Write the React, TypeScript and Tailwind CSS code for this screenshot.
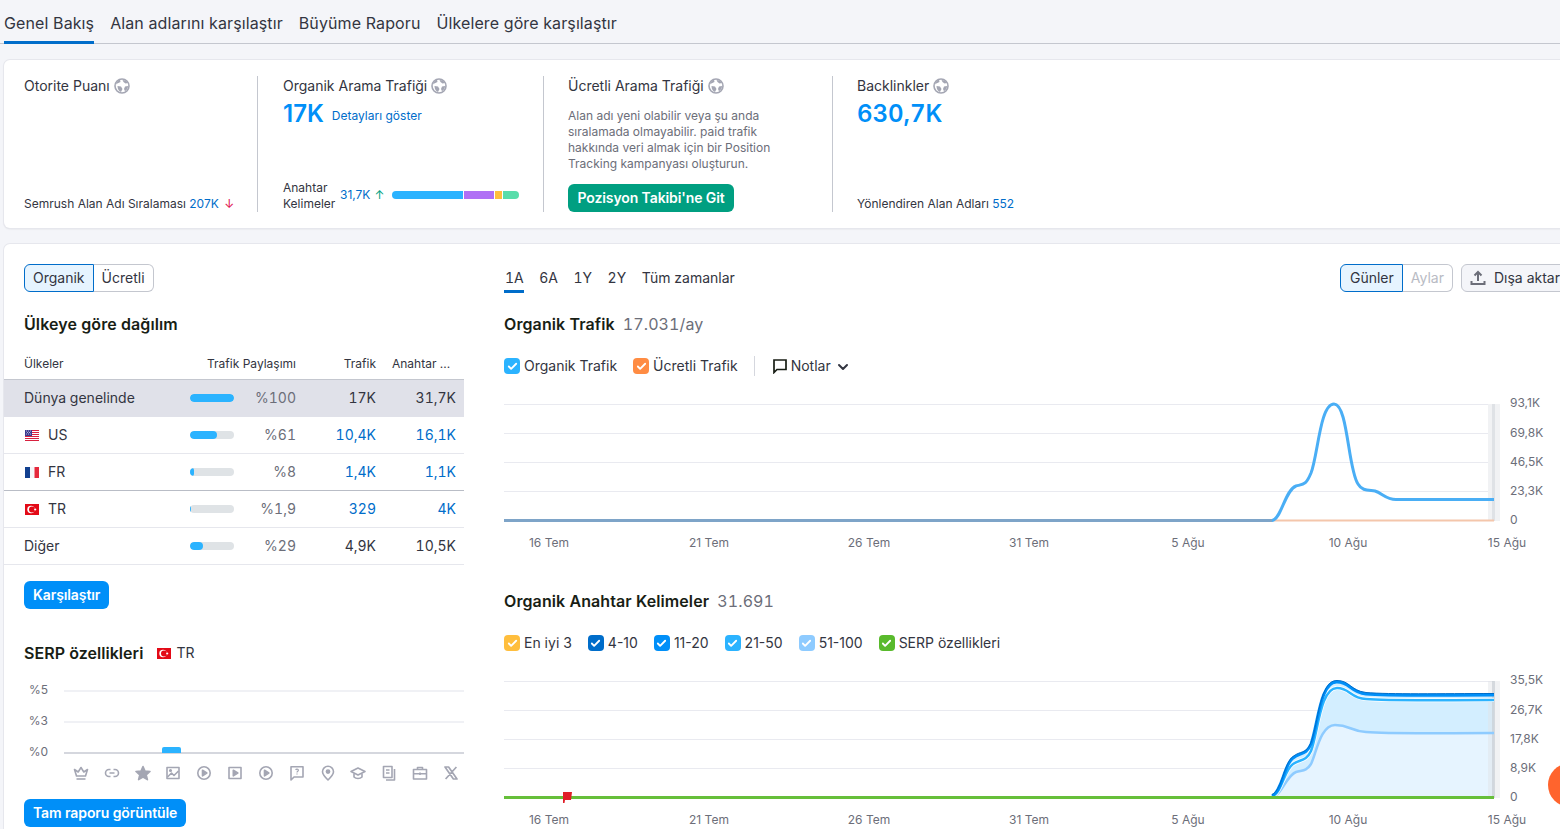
import React from 'react';
import { Check, ChevronDown } from 'lucide-react';

const tabs = ['Genel Bakış', 'Alan adlarını karşılaştır', 'Büyüme Raporu', 'Ülkelere göre karşılaştır'];
const ranges = ['1A', '6A', '1Y', '2Y', 'Tüm zamanlar'];

const rows = [
  { name: 'Dünya genelinde', flag: null, bar: 100, pct: '%100', traffic: '17K', kw: '31,7K', link: false, cls: 'bg-[#e0e1e9] border-b border-transparent' },
  { name: 'US', flag: 'us', bar: 61, pct: '%61', traffic: '10,4K', kw: '16,1K', link: true, cls: 'border-b border-[#e6e7ed]' },
  { name: 'FR', flag: 'fr', bar: 8, pct: '%8', traffic: '1,4K', kw: '1,1K', link: true, cls: 'border-b border-[#b9bdc6]' },
  { name: 'TR', flag: 'tr', bar: 1.9, pct: '%1,9', traffic: '329', kw: '4K', link: true, cls: 'border-b border-[#e6e7ed]' },
  { name: 'Diğer', flag: null, bar: 29, pct: '%29', traffic: '4,9K', kw: '10,5K', link: false, cls: 'border-b border-[#e6e7ed]' },
];

const GlobeIcon = () => (
  <svg width="16" height="16" viewBox="0 0 16 16" className="shrink-0">
    <circle cx="8" cy="8" r="7" fill="none" stroke="#a4a6b3" strokeWidth="1.6" />
    <path d="M2 6.5 C4 4.5 5 5 6.5 4 L6 1.8 C4 2 2.6 3.8 2 6.5Z M8.5 2 L9.5 4 L11.5 5.5 L14 5 C13 3 11 2 8.5 2Z M3.5 8 L7 8.5 L8.5 11 L7 14 C5 13.5 3.5 11 3.5 8Z M11 8.5 L14 8 C14 10.5 12.8 12.2 11 13.2 L10 11Z" fill="#a4a6b3" />
  </svg>
);

const Flag = ({ code }: { code: string }) => {
  if (code === 'us') {
    return (
      <svg width="14" height="11" viewBox="0 0 14 11" className="ml-px shrink-0">
        <rect width="14" height="11" fill="#fff" />
        {[0, 2, 4, 6, 8, 10].map((y) => <rect key={y} y={y} width="14" height="1" fill="#d8213f" />)}
        <rect width="7" height="6" fill="#3c3b8e" />
        <path d="M1 1h1M3 1h1M5 1h1M2 2.5h1M4 2.5h1M1 4h1M3 4h1M5 4h1" stroke="#cfd0e8" strokeWidth="0.8" />
      </svg>
    );
  }
  if (code === 'fr') {
    return (
      <svg width="14" height="11" viewBox="0 0 14 11" className="ml-px shrink-0">
        <rect width="5" height="11" fill="#12408f" />
        <rect x="5" width="4.5" height="11" fill="#f6f6f8" />
        <rect x="9.5" width="4.5" height="11" fill="#e5293c" />
      </svg>
    );
  }
  return (
    <svg width="14" height="11" viewBox="0 0 14 11" className="ml-px shrink-0">
      <rect width="14" height="11" fill="#e30a17" />
      <circle cx="6" cy="5.5" r="3.7" fill="#fff" />
      <circle cx="7" cy="5.5" r="3" fill="#e30a17" />
      <circle cx="10.2" cy="5.5" r="1.1" fill="#fff" />
    </svg>
  );
};

const Box = ({ color, label }: { color: string; label: string }) => (
  <div className="flex items-center gap-1 text-sm text-[#333541]">
    <span className={`flex h-4 w-4 items-center justify-center rounded-[4px] ${color}`}>
      <Check size={11} strokeWidth={4} className="text-white" />
    </span>
    <span>{label}</span>
  </div>
);

const Bar = ({ value }: { value: number }) => (
  <div className="h-2 w-11 overflow-hidden rounded-full bg-[#dfe3e6]">
    <div className="h-full rounded-full bg-[#2bb3ff]" style={{ width: `${value}%` }} />
  </div>
);

const serpIcons = [
  <><path d="M1.5 4.5 L5.2 7 L8 2.5 L10.8 7 L14.5 4.5 L12.5 11 H3.5Z" /><path d="M3.5 14 H12.5" /></>,
  <><path d="M6.5 4.5 H5 a3.5 3.5 0 0 0 0 7 H6.5 M9.5 4.5 H11 a3.5 3.5 0 0 1 0 7 H9.5 M5.5 8 H10.5" /></>,
  <path d="M8 1.5 L10 6 L15 6.5 L11.2 9.8 L12.4 14.6 L8 12 L3.6 14.6 L4.8 9.8 L1 6.5 L6 6Z" fill="#a4a6b3" />,
  <><rect x="2" y="2.5" width="12" height="11" /><path d="M2.5 12 L6.5 8 L9 10.5 L13.5 6" /><circle cx="5.5" cy="5.5" r="0.8" fill="#a4a6b3" /></>,
  <><circle cx="8" cy="8" r="6.2" /><path d="M6.5 5.2 L10.8 8 L6.5 10.8Z" fill="#a4a6b3" /></>,
  <><rect x="2" y="2.5" width="12" height="11" /><path d="M6.3 5.2 L10.8 8 L6.3 10.8Z" fill="#a4a6b3" /></>,
  <><circle cx="8" cy="8" r="6.2" /><path d="M6.5 5.2 L10.8 8 L6.5 10.8Z" fill="#a4a6b3" /></>,
  <><path d="M2 1.8 H14 V12 H5 L2 15Z" /><path d="M6.7 5 C7 3.7 9.4 3.8 9.4 5.2 C9.4 6.2 8 6.3 8 7.4 M8 8.6 V9.6" strokeWidth="1.2" /></>,
  <><path d="M8 15 C5 12 2.5 9.5 2.5 6.7 a5.5 5.5 0 0 1 11 0 C13.5 9.5 11 12 8 15Z" /><circle cx="8" cy="6.6" r="1.6" fill="#a4a6b3" /></>,
  <><path d="M1 6.5 L8 3 L15 6.5 L8 10Z" /><path d="M4 8.5 V12 C6 14 10 14 12 12 V8.5" /></>,
  <><path d="M2.5 1.5 H11 V12.5 H2.5Z" /><path d="M5 5 H8.5 M5 8 H8.5" /><path d="M13.5 4 V15 H5" /></>,
  <><rect x="1.5" y="4.5" width="13" height="9.5" /><path d="M5.5 4.5 V2.5 H10.5 V4.5 M1.5 8.8 H14.5 M8 7.5 V10" /></>,
  <path d="M2 2 H5.6 L14 14 H10.4Z M13.4 2 L2.6 14" strokeWidth="1.7" />,
];

const SerpIcon = ({ children }: { children: React.ReactNode }) => (
  <svg width="16" height="16" viewBox="0 0 16 16" fill="none" stroke="#a4a6b3" strokeWidth="1.6" strokeLinejoin="round">
    {children}
  </svg>
);

const AxisText = ({ x, y, t, anchor = 'start' }: { x: number; y: number; t: string; anchor?: 'start' | 'middle' }) => (
  <text x={x} y={y} fontSize="12" fill="#6c6e79" textAnchor={anchor}>{t}</text>
);

const xTicks: [number, string][] = [[549, '16 Tem'], [709, '21 Tem'], [869, '26 Tem'], [1029, '31 Tem'], [1188, '5 Ağu'], [1348, '10 Ağu'], [1507, '15 Ağu']];

const TrafficChart = () => (
  <svg width="1056" height="165" viewBox="504 390 1056 165" className="block">
    {[404, 433, 462, 491].map((y) => <line key={y} x1="504" x2="1494" y1={y + 0.5} y2={y + 0.5} stroke="#e9eaf0" strokeWidth="1" />)}
    <rect x="1488" y="404" width="12" height="117" fill="#f1f2f4" />
    <rect x="1492" y="404" width="3" height="117" fill="#dfe2e6" />
    <line x1="504" x2="1494" y1="520.5" y2="520.5" stroke="#f4c6ab" strokeWidth="2" />
    <path d="M504 520.5 H1272 C1281 520 1285 490 1296 486 C1304 484 1306 485 1311 473 C1318 455 1320 404 1334 404 C1348 404 1348 470 1358 484 C1362 491 1368 490 1375 491 C1382 493 1386 499.5 1396 499.5 H1494" fill="none" stroke="#4aaef5" strokeWidth="3" />
    <line x1="504" x2="1272" y1="520.5" y2="520.5" stroke="#7ea4c8" strokeWidth="3" />
    {['93,1K', '69,8K', '46,5K', '23,3K', '0'].map((t, i) => <AxisText key={t} x={1510} y={[407, 437, 466, 495, 524][i]} t={t} />)}
    {xTicks.map(([x, t]) => <AxisText key={t} x={x} y={547} t={t} anchor="middle" />)}
  </svg>
);

const top1 = 'M1272 796 C1282 792 1284 764 1293 758 C1300 752 1306 756 1311 744 C1318 725 1320 681 1337 682 C1350 682 1350 692 1366 694 C1390 696 1440 695 1494 695';
const top2 = 'M1272 796 C1282 793 1284 770 1293 764 C1300 759 1306 762 1311 751 C1318 733 1320 688 1337 688 C1350 688 1350 698 1366 699 C1390 701 1440 700 1494 700';
const low = 'M1272 797 C1282 795 1286 776 1296 772 C1302 770 1306 772 1311 764 C1316 755 1320 725 1335 725 C1350 725 1350 731 1366 732 C1390 734 1440 733 1494 733';

const KeywordChart = () => (
  <svg width="1056" height="159" viewBox="504 670 1056 159" className="block">
    {[681, 710, 739, 768].map((y) => <line key={y} x1="504" x2="1494" y1={y + 0.5} y2={y + 0.5} stroke="#e9eaf0" strokeWidth="1" />)}
    <path d={`${top1} V797 H1272Z`} fill="#d3eeff" />
    <path d={`${low} V797 H1272Z`} fill="#e6f4ff" />
    <rect x="1488" y="681" width="12" height="117" fill="#dfe2e6" opacity="0.45" />
    <rect x="1492" y="681" width="3" height="117" fill="#c9ced4" opacity="0.7" />
    <path d={low} fill="none" stroke="#8ecbff" strokeWidth="2.5" />
    <path d={top2} fill="none" stroke="#fff" strokeWidth="4" />
    <path d={top2} fill="none" stroke="#2bb3ff" strokeWidth="2.5" />
    <path d={top1} fill="none" stroke="#008ff8" strokeWidth="3" />
    <path d={top1} fill="none" stroke="#006dca" strokeWidth="1" transform="translate(0 -1.5)" />
    <line x1="504" x2="1494" y1="797.5" y2="797.5" stroke="#66bf3a" strokeWidth="3" />
    <path d="M563 792 H572 L571 800 H565 L564.5 803 H563Z" fill="#e01f28" />
    {['35,5K', '26,7K', '17,8K', '8,9K', '0'].map((t, i) => <AxisText key={t} x={1510} y={[684, 714, 743, 772, 801][i]} t={t} />)}
    {xTicks.map(([x, t]) => <AxisText key={t} x={x} y={824} t={t} anchor="middle" />)}
  </svg>
);

const Value = ({ children, className = '' }: { children: React.ReactNode; className?: string }) => (
  <span className={`text-right ${className}`}>{children}</span>
);

export default function App() {
  return (
    <div className="relative h-[829px] w-[1560px] overflow-hidden bg-[#f4f5f9] font-['Inter',sans-serif] text-[#333541]">
      {/* Tabs */}
      <div className="flex h-11 gap-4 border-b border-[#c4c7cf] pl-1">
        {tabs.map((tab, i) => (
          <div key={tab} className={`relative flex h-11 items-center pt-[2px] text-base tracking-[0.105px] ${i === 0 ? 'after:absolute after:bottom-0 after:left-0 after:right-0 after:h-[3px] after:bg-[#006dca]' : ''}`}>
            {tab}
          </div>
        ))}
      </div>

      {/* Summary card */}
      <div className="ml-1 mt-4 flex h-[168px] w-[1580px] rounded-md bg-white py-4 shadow-[0_0_0_1px_#e6e7ed,0_1px_2px_rgba(0,0,0,0.12)]">
        <div className="flex w-[254px] flex-col justify-between border-r border-[#c4c7cf] pl-5">
          <div className="flex h-5 items-center gap-1 text-sm">Otorite Puanı <GlobeIcon /></div>
          <div className="text-xs">Semrush Alan Adı Sıralaması <span className="text-[#006dca]">207K</span> <span className="ml-0.5 text-[#e0114e]">↓</span></div>
        </div>

        <div className="flex w-[286px] flex-col border-r border-[#c4c7cf] pl-[25px]">
          <div className="flex h-5 items-center gap-1 text-sm">Organik Arama Trafiği <GlobeIcon /></div>
          <div className="mt-0.5 flex items-center gap-2">
            <span className="text-2xl font-semibold leading-8 text-[#008ff8]">17K</span>
            <span className="mt-1 text-xs text-[#006dca]">Detayları göster</span>
          </div>
          <div className="mt-auto flex items-center">
            <div className="w-[57px] text-xs leading-4">Anahtar Kelimeler</div>
            <span className="-mt-0.5 text-xs text-[#006dca]">31,7K</span>
            <span className="-mt-0.5 ml-1 text-xs text-[#009f81]">↑</span>
            <div className="ml-2 -mt-0.5 flex h-2 w-[127px] gap-px overflow-hidden rounded-full">
              <div className="w-[71px] bg-[#2bb3ff]" />
              <div className="w-[30px] bg-[#b070f5]" />
              <div className="w-[7px] bg-[#ffbe3d]" />
              <div className="flex-1 bg-[#59ddaa]" />
            </div>
          </div>
        </div>

        <div className="flex w-[289px] flex-col border-r border-[#c4c7cf] pl-6">
          <div className="flex h-5 items-center gap-1 text-sm">Ücretli Arama Trafiği <GlobeIcon /></div>
          <p className="mt-[12px] w-[212px] text-xs leading-4 text-[#6c6e79]">Alan adı yeni olabilir veya şu anda sıralamada olmayabilir. paid trafik hakkında veri almak için bir Position Tracking kampanyası oluşturun.</p>
          <button className="mt-auto flex h-7 w-[166px] items-center justify-center rounded-md bg-[#009f81] text-sm font-semibold tracking-[-0.1px] text-white">Pozisyon Takibi'ne Git</button>
        </div>

        <div className="flex flex-col pl-6">
          <div className="flex h-5 items-center gap-1 text-sm">Backlinkler <GlobeIcon /></div>
          <span className="mt-0.5 text-2xl font-semibold leading-8 tabular-nums text-[#008ff8]">630,7K</span>
          <div className="mt-auto text-xs">Yönlendiren Alan Adları <span className="text-[#006dca]">552</span></div>
        </div>
      </div>

      {/* Main card */}
      <div className="ml-1 mt-4 flex h-[620px] w-[1580px] gap-10 rounded-md bg-white pt-5 shadow-[0_0_0_1px_#e6e7ed]">
        <div className="w-[460px] shrink-0">
          <div className="ml-5 flex h-7 w-fit text-sm">
            <div className="flex items-center rounded-l-md border border-[#006dca] bg-[#e6f4ff] px-2">Organik</div>
            <div className="flex items-center rounded-r-md border border-l-0 border-[#c4c7cf] px-2">Ücretli</div>
          </div>
          <h2 className="ml-5 mt-[22px] text-base font-semibold leading-5 tracking-[0.1px] text-[#181e15]">Ülkeye göre dağılım</h2>

          <div className="mt-[18px] grid h-[28px] grid-cols-[186px_44px_62px_80px_80px] items-center border-b border-[#c4c7cf] pb-[3px] text-xs">
            <span className="pl-5">Ülkeler</span>
            <Value className="col-span-2">Trafik Paylaşımı</Value>
            <Value>Trafik</Value>
            <span className="pl-4 pr-1">Anahtar ...</span>
          </div>

          {rows.map((row) => (
            <div key={row.name} className={`grid h-[37px] grid-cols-[186px_44px_62px_80px_80px] items-center pr-2 text-sm tabular-nums ${row.cls}`}>
              <span className="flex items-center gap-[9px] pl-5">
                {row.flag && <Flag code={row.flag} />}
                {row.name}
              </span>
              <Bar value={row.bar} />
              <Value className="text-[#6c6e79]">{row.pct}</Value>
              <Value className={row.link ? 'text-[#006dca]' : ''}>{row.traffic}</Value>
              <Value className={row.link ? 'text-[#006dca]' : ''}>{row.kw}</Value>
            </div>
          ))}

          <button className="ml-5 mt-4 flex h-7 items-center rounded-md bg-[#008ff8] px-[9px] text-sm font-semibold tracking-[-0.1px] text-white">Karşılaştır</button>

          <div className="ml-5 mt-[34px] flex items-center gap-[13px]">
            <h2 className="text-base font-semibold leading-5 tracking-[0.05px] text-[#181e15]">SERP özellikleri</h2>
            <div className="flex items-center gap-[5px] text-sm"><Flag code="tr" /> TR</div>
          </div>

          {/* SERP chart */}
          <div className="ml-5 mt-3">
            <div className="flex h-[31px] items-center gap-4 text-xs text-[#6c6e79]"><span className="w-6 pb-0.5 text-right">%5</span><div className="h-0.5 flex-1 bg-[#f0f1f5]" /></div>
            <div className="flex h-[31px] items-center gap-4 text-xs text-[#6c6e79]"><span className="w-6 pb-0.5 text-right">%3</span><div className="h-0.5 flex-1 bg-[#f0f1f5]" /></div>
            <div className="relative flex h-[31px] items-center gap-4 text-xs text-[#6c6e79]">
              <span className="w-6 pb-0.5 text-right">%0</span>
              <div className="h-0.5 flex-1 bg-[#d5d7de]" />
              <div className="absolute left-[138px] top-[10px] h-[6px] w-[19px] rounded-t-[2px] bg-[#2bb3ff]" />
            </div>
            <div className="relative ml-[49px] -mt-[3px] flex w-[386px] justify-between">
              {serpIcons.map((icon, i) => <SerpIcon key={i}>{icon}</SerpIcon>)}
            </div>
          </div>

          <button className="ml-5 mt-[18px] flex h-7 items-center rounded-md bg-[#008ff8] px-[9px] text-sm font-semibold tracking-[-0.1px] text-white">Tam raporu görüntüle</button>
        </div>

        <div className="w-[1076px] shrink-0">
          <div className="flex h-7 items-center justify-between pr-[11px]">
            <div className="flex gap-[15.5px] pl-px text-sm tabular-nums">
              {ranges.map((r, i) => (
                <span key={r} className={`relative ${i === 0 ? 'after:absolute after:-left-px after:right-0 after:top-[22px] after:h-[3px] after:bg-[#006dca]' : ''}`}>{r}</span>
              ))}
            </div>
            <div className="flex text-sm">
              <div className="flex items-center rounded-l-md border border-[#006dca] bg-[#e6f4ff] pl-[9px] pr-2">Günler</div>
              <div className="flex items-center rounded-r-md border border-l-0 border-[#c4c7cf] px-2 text-[#b9bbc4]">Aylar</div>
              <div className="ml-2 flex h-7 items-center gap-2 rounded-md border border-[#c4c7cf] bg-[#f4f5f9] px-2">
                <svg width="16" height="16" viewBox="0 0 16 16" fill="none" stroke="#6c6e79" strokeWidth="2">
                  <path d="M8 11 V2.5 M4.5 5.5 L8 2 L11.5 5.5 M1.5 11 V14 H14.5 V11" />
                </svg>
                Dışa aktar
              </div>
            </div>
          </div>

          <h2 className="mt-[22px] text-base font-semibold leading-5 tracking-[0.1px] text-[#181e15]">Organik Trafik <span className="ml-1 font-normal tabular-nums text-[#6c6e79]">17.031/ay</span></h2>

          <div className="mt-[22px] flex h-5 items-center gap-4">
            <Box color="bg-[#2bb3ff]" label="Organik Trafik" />
            <Box color="bg-[#ff8c43]" label="Ücretli Trafik" />
            <div className="h-5 w-px bg-[#d5d7de]" />
            <div className="ml-px flex items-center text-sm">
              <svg width="16" height="16" viewBox="0 0 16 16" fill="none" stroke="#181e15" strokeWidth="1.7" className="mr-[3px]">
                <path d="M2 2 H14 V11.5 H5 L2 14.5Z" />
              </svg>
              Notlar
              <ChevronDown size={16} strokeWidth={3} className="ml-1 mt-0.5" />
            </div>
          </div>

          <div className="mt-[14px]"><TrafficChart /></div>

          <h2 className="mt-[36px] text-base font-semibold leading-5 tracking-[0.1px] text-[#181e15]">Organik Anahtar Kelimeler <span className="ml-1 font-normal tabular-nums text-[#6c6e79]">31.691</span></h2>

          <div className="mt-[22px] flex h-5 items-center gap-4">
            <Box color="bg-[#ffbe3d]" label="En iyi 3" />
            <Box color="bg-[#006dca]" label="4-10" />
            <Box color="bg-[#008ff8]" label="11-20" />
            <Box color="bg-[#2bb3ff]" label="21-50" />
            <Box color="bg-[#8ecbff]" label="51-100" />
            <Box color="bg-[#59ba2c]" label="SERP özellikleri" />
          </div>

          <div className="mt-[17px]"><KeywordChart /></div>
        </div>
      </div>

      {/* Chat bubble */}
      <div className="absolute left-[1548px] top-[763px] h-11 w-11 rounded-full bg-[#ff642d]" />
    </div>
  );
}
